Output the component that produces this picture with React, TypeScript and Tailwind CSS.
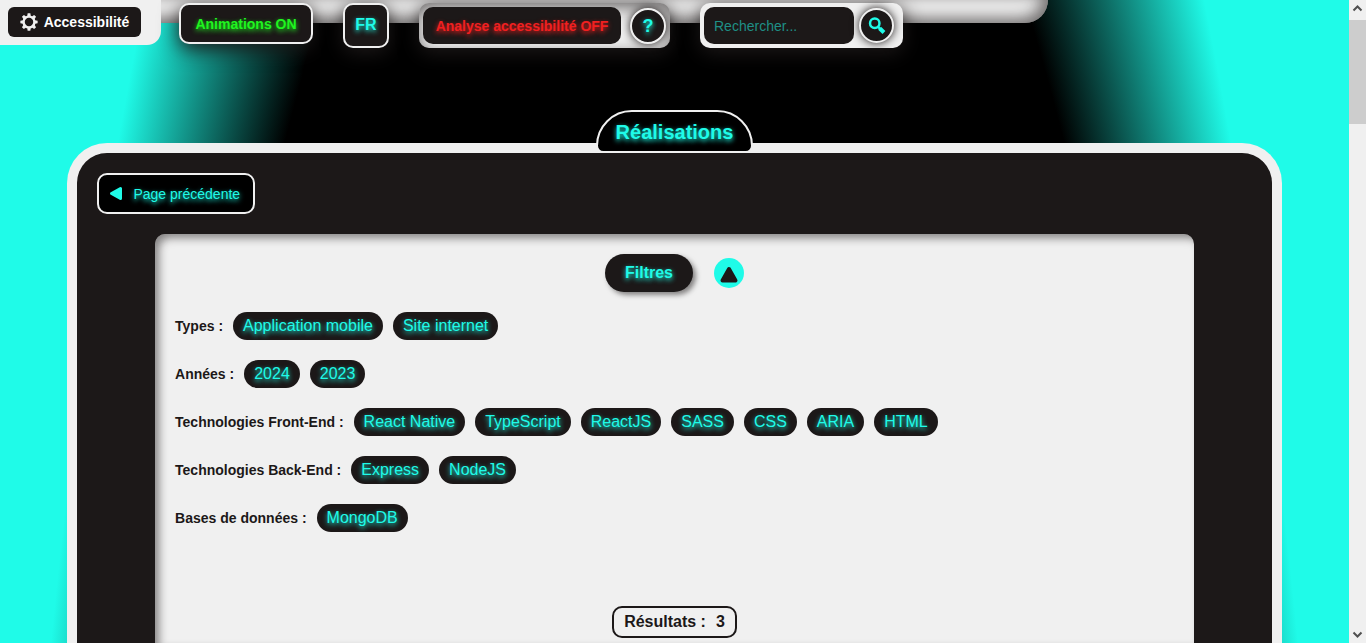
import React from "react";

const GLOW = "[text-shadow:0_2px_5px_#1ffbe8]";

const filters: { label: string; tags: string[] }[] = [
  { label: "Types :", tags: ["Application mobile", "Site internet"] },
  { label: "Années :", tags: ["2024", "2023"] },
  {
    label: "Technologies Front-End :",
    tags: ["React Native", "TypeScript", "ReactJS", "SASS", "CSS", "ARIA", "HTML"],
  },
  { label: "Technologies Back-End :", tags: ["Express", "NodeJS"] },
  { label: "Bases de données :", tags: ["MongoDB"] },
];

function GearIcon() {
  return (
    <svg viewBox="-10 -10 20 20" className="size-[18px] shrink-0" aria-hidden="true">
      <circle r="6" fill="none" stroke="#f0f0f0" strokeWidth="2.6" />
      {[0, 45, 90, 135, 180, 225, 270, 315].map((a) => (
        <path key={a} d="M-2 -6.5 L-1.5 -9.6 H1.5 L2 -6.5 Z" fill="#f0f0f0" transform={`rotate(${a})`} />
      ))}
    </svg>
  );
}

function Toolbar() {
  return (
    <div className="relative flex items-start">
      <div className="rounded-br-[14px] bg-[#f0f0f0] pt-[7px] pr-5 pb-2 pl-2">
        <button className="flex h-[30px] w-[133px] items-center justify-center gap-[6px] rounded-[6px] bg-[#1c1818] text-sm font-bold text-white">
          <GearIcon />
          Accessibilité
        </button>
      </div>
      <div className="ml-[18px] flex items-start gap-[30px] pt-[3px]">
        <button className="h-[41px] w-[134px] rounded-[10px] border-2 border-[#f0f0f0] bg-[#1c1818] text-sm font-bold text-[#1ff51f] shadow-[0_5px_20px_#1c1818] [text-shadow:0_2px_5px_#1ff51f]">
          Animations ON
        </button>
        <button className={`h-[45px] w-[46px] rounded-[10px] border-2 border-[#f0f0f0] bg-[#1c1818] pb-[2px] text-base font-bold text-[#1ffbe8] shadow-[0_5px_20px_#1c1818] ${GLOW}`}>
          FR
        </button>
        <div className="flex h-[45px] items-center gap-[9px] rounded-[10px] bg-[#f0f0f0] px-1 shadow-[0_5px_20px_#1c1818,inset_0_5px_15px_#1c181899]">
          <button className="h-[37px] w-[198px] rounded-[10px] bg-[#1c1818] text-sm font-bold text-[#f02020] [text-shadow:0_2px_5px_#f02020]">
            Analyse accessibilité OFF
          </button>
          <button className={`size-9 rounded-full border-2 border-[#f0f0f0] bg-[#1c1818] text-lg leading-none font-bold text-[#1ffbe8] shadow-[0_0_10px_#1c1818] ${GLOW}`}>
            ?
          </button>
        </div>
        <form className="flex h-[45px] items-center gap-[5px] rounded-[10px] bg-[#f0f0f0] pr-[9px] pl-1 shadow-[0_5px_20px_#1c1818]">
          <input
            type="text"
            aria-label="Rechercher"
            placeholder="Rechercher..."
            className="h-[37px] w-[150px] rounded-[10px] bg-[#1c1818] px-[10px] text-sm text-[#1ffbe8] placeholder:text-[#1f8f86]"
          />
          <button
            type="button"
            aria-label="Lancer la recherche"
            className="flex size-[35px] items-center justify-center rounded-full border-2 border-[#f0f0f0] bg-[#1c1818] shadow-[0_0_10px_#1c1818]"
          >
            <svg viewBox="0 0 16 16" className="size-[18px] shrink-0" fill="none" stroke="#1ffbe8">
              <circle cx="6" cy="5.5" r="4.2" strokeWidth="2.2" />
              <path d="M9 8.8 10.8 10.6" strokeWidth="2" />
              <path d="M10.3 10 14.2 13.8" strokeWidth="3.6" />
            </svg>
          </button>
        </form>
      </div>
    </div>
  );
}

function Filters() {
  return (
    <section className="mx-auto mt-5 flex w-[87%] grow flex-col rounded-t-[10px] bg-[#f0f0f0] px-5 pt-5 shadow-[inset_5px_5px_8px_-1px_#1c181880]">
      <div className="flex items-center justify-center gap-[21px]">
        <h2 className={`flex h-[38px] items-center rounded-full bg-[#1c1818] px-5 text-base font-bold text-[#1ffbe8] shadow-[3px_3px_5px_#1c181880] ${GLOW}`}>
          Filtres
        </h2>
        <button aria-label="Replier les filtres" className="size-[30px] rounded-full bg-[#1ffbe8]">
          <svg viewBox="0 0 30 30" className="size-[30px]" aria-hidden="true">
            <path d="M15 11 L21.5 22.5 H8.5 Z" fill="#1c1818" stroke="#1c1818" strokeWidth="4" strokeLinejoin="round" />
          </svg>
        </button>
      </div>
      <div className="mt-5 flex flex-col gap-5">
        {filters.map((group) => (
          <div key={group.label} className="flex items-center gap-[10px]">
            <h3 className="text-sm font-bold text-[#1c1818]">{group.label}</h3>
            {group.tags.map((tag) => (
              <button key={tag} className={`h-7 rounded-full bg-[#1c1818] px-[10px] text-base leading-7 text-[#1ffbe8] ${GLOW}`}>
                {tag}
              </button>
            ))}
          </div>
        ))}
      </div>
      <p className="mt-[74px] flex h-8 items-center gap-[10px] self-center rounded-[10px] border-2 border-[#1c1818] px-[10px] text-base font-bold text-[#1c1818]">
        <span>Résultats :</span>
        <span>3</span>
      </p>
    </section>
  );
}

function Scrollbar() {
  return (
    <div className="flex w-[17px] shrink-0 flex-col justify-between bg-[#f0f0f0]" aria-hidden="true">
      <div>
        <svg viewBox="0 0 17 20" className="h-5 w-[17px]" fill="none" stroke="#505050" strokeWidth="2">
          <path d="M4.5 10.5 8.5 6.5 12.5 10.5" />
        </svg>
        <div className="h-[104px] bg-[#cdcdcd]" />
      </div>
      <svg viewBox="0 0 17 20" className="h-5 w-[17px]" fill="none" stroke="#505050" strokeWidth="2">
        <path d="M4.5 9.5 8.5 13.5 12.5 9.5" />
      </svg>
    </div>
  );
}

export default function App() {
  return (
    <div className="flex h-screen overflow-hidden font-['Liberation_Sans',Arial,sans-serif]">
      <div className="relative flex grow flex-col bg-[radial-gradient(663px_2453px_at_50%_1475px,#000_80%,#1ffbe8_100%)]">
        <div className="absolute top-0 left-0 h-[23px] w-[1048px] rounded-br-[40px] bg-[#f0f0f0] shadow-[inset_-5px_-5px_15px_#1c181899]" />
        <Toolbar />
        <main className="mx-auto mt-[62px] flex w-[90%] grow flex-col items-center">
          <h1 className={`relative z-10 -mb-[10px] flex h-[43px] items-center rounded-t-[40px] rounded-b-[8px] border-2 border-[#f0f0f0] bg-black px-[18px] text-xl font-bold text-[#1ffbe8] ${GLOW}`}>
            Réalisations
          </h1>
          <div className="flex w-full grow flex-col rounded-t-[40px] border-x-10 border-t-10 border-[#f0f0f0] bg-[#1c1818] pt-5">
            <a href="#precedente" className={`ml-5 flex h-[41px] w-[158px] items-center gap-[10px] self-start rounded-[10px] border-2 border-[#f0f0f0] bg-black px-[10px] text-sm text-[#1ffbe8] ${GLOW}`}>
              <svg viewBox="0 0 14 16" className="h-4 w-[14px] shrink-0" aria-hidden="true">
                <path d="M2.5 7.5 11.5 2.5 V12.5 Z" fill="#1ffbe8" stroke="#1ffbe8" strokeWidth="3" strokeLinejoin="round" />
              </svg>
              Page précédente
            </a>
            <Filters />
          </div>
        </main>
      </div>
      <Scrollbar />
    </div>
  );
}
